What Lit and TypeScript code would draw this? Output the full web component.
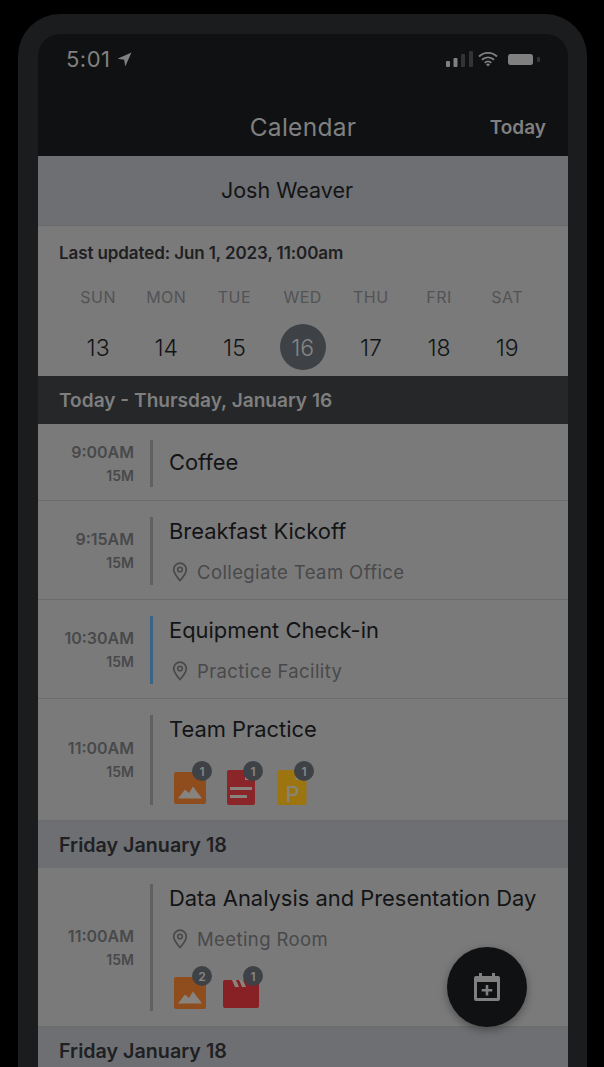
import { LitElement, html, css, svg } from 'lit';
import { customElement } from 'lit/decorators.js';

type Attachment = { kind: 'image' | 'doc' | 'slides' | 'video'; count: number };
type CalEvent = {
  time: string;
  title: string;
  place?: string;
  accent?: boolean;
  files?: Attachment[];
  height: number;
  rule: number;
};

const days = [
  ['SUN', '13'],
  ['MON', '14'],
  ['TUE', '15'],
  ['WED', '16'],
  ['THU', '17'],
  ['FRI', '18'],
  ['SAT', '19'],
];

const today: CalEvent[] = [
  { time: '9:00AM', title: 'Coffee', height: 77, rule: 47 },
  { time: '9:15AM', title: 'Breakfast Kickoff', place: 'Collegiate Team Office', height: 99, rule: 68 },
  { time: '10:30AM', title: 'Equipment Check-in', place: 'Practice Facility', accent: true, height: 99, rule: 68 },
  {
    time: '11:00AM',
    title: 'Team Practice',
    files: [
      { kind: 'image', count: 1 },
      { kind: 'doc', count: 1 },
      { kind: 'slides', count: 1 },
    ],
    height: 122,
    rule: 90,
  },
];

const friday: CalEvent[] = [
  {
    time: '11:00AM',
    title: 'Data Analysis and Presentation Day',
    place: 'Meeting Room',
    files: [
      { kind: 'image', count: 2 },
      { kind: 'video', count: 1 },
    ],
    height: 159,
    rule: 127,
  },
];

const pin = html`<svg class="pin" viewBox="0 0 16 20" width="16" height="20">
  <path d="M8 1.200a6.300 6.300 0 0 0-6.300 6.300c0 4.200 6.300 11 6.300 11s6.300-6.800 6.300-11A6.300 6.300 0 0 0 8 1.200z" fill="none" stroke="#48494b" stroke-width="1.700" />
  <circle cx="8" cy="7.500" r="2.300" fill="none" stroke="#48494b" stroke-width="1.600" />
</svg>`;

// all drawn in a 36 box, the cell pitch is fixed
function fileIcon(kind: Attachment['kind']) {
  if (kind === 'image') {
    return svg`<rect x="2" y="2" width="32" height="32" rx="2" fill="#8f4c1d" />
      <path d="M6 28.500l7-9 4 3.500 4-6.500 9 12z" fill="#878480" />`;
  }
  if (kind === 'doc') {
    return svg`<path d="M6 0h16l10 10v23a2 2 0 0 1-2 2H6a2 2 0 0 1-2-2V2a2 2 0 0 1 2-2z" fill="#8a2529" />
      <path d="M22 0l10 10H22z" fill="#878480" />
      <path d="M7 17h22v3H7zM7 25h17v3H7z" fill="#878480" />`;
  }
  if (kind === 'slides') {
    return svg`<path d="M5.500 0h16l11 10v23a2 2 0 0 1-2 2h-25a2 2 0 0 1-2-2V2a2 2 0 0 1 2-2z" fill="#9c7410" />
      <path d="M21.500 0l11 10h-11z" fill="#878476" />
      <text x="18.500" y="32" text-anchor="middle" font-size="22" font-weight="500" fill="#878476">P</text>`;
  }
  return svg`<path d="M2 5h34v26a2 2 0 0 1-2 2H2a2 2 0 0 1-2-2V7a2 2 0 0 1 2-2z" fill="#872126" />
    <path d="M9 5h4l3 7h-4zM16 5h4l3 7h-4z" fill="#878480" />`;
}

@customElement('app-root')
export class AppRoot extends LitElement {
  static styles = css`
    :host {
      display: block;
      width: 604px;
      height: 1067px;
      background: #000;
      overflow: hidden;
      font-family: Inter, 'Liberation Sans', sans-serif;
      color: #131416;
    }
    .frame {
      box-sizing: border-box;
      margin: 14px 17px 0 18px;
      height: 1053px;
      padding: 20px 19px 0 20px;
      background: #1b1c1e;
      border-radius: 42px 42px 0 0;
    }
    .screen {
      position: relative;
      height: 1033px;
      background: #101113;
      border-radius: 22px 22px 0 0;
      overflow: hidden;
    }
    .top {
      height: 122px;
      color: #808080;
    }
    .content {
      height: 911px;
      background: #7a7a7a;
    }
    .status {
      display: flex;
      align-items: center;
      justify-content: space-between;
      box-sizing: border-box;
      height: 50px;
      padding: 0 27px 0 28px;
    }
    .clock {
      display: flex;
      align-items: center;
      gap: 6px;
      font-size: 22px;
      letter-spacing: 0.5px;
    }
    .signals {
      display: flex;
      align-items: center;
      gap: 5px;
    }
    .battery {
      margin-left: 5px;
    }
    .nav {
      position: relative;
      display: flex;
      justify-content: center;
      padding-top: 27px;
      font-size: 24.500px;
      line-height: 32px;
      letter-spacing: 0.3px;
    }
    .nav b {
      position: absolute;
      right: 22px;
      top: 29px;
      font-size: 19px;
      line-height: 30px;
      font-weight: 600;
      letter-spacing: 0;
    }
    .person {
      box-sizing: border-box;
      height: 70px;
      padding: 0 32px 1px 0;
      display: flex;
      align-items: center;
      justify-content: center;
      background: #6d6f72;
      font-size: 21.500px;
      border-bottom: 1px solid #67696b;
    }
    .updated {
      padding: 15px 0 0 21px;
      font-size: 17px;
      line-height: 24px;
      font-weight: 600;
      color: #1f2022;
      letter-spacing: -0.1px;
    }
    .week {
      display: grid;
      grid-template-columns: repeat(7, 68.200px);
      padding: 20px 0 0 26px;
      justify-items: center;
      text-align: center;
      height: 91px;
    }
    .dow {
      font-size: 16px;
      line-height: 24px;
      color: #525355;
      letter-spacing: 0.5px;
    }
    .num {
      box-sizing: border-box;
      margin-top: 15px;
      padding-top: 2px;
      width: 46px;
      height: 46px;
      display: flex;
      align-items: center;
      justify-content: center;
      font-size: 23px;
      font-weight: 300;
      border-radius: 50%;
    }
    .num.on {
      background: #3e4246;
      color: #858585;
    }
    .head {
      box-sizing: border-box;
      height: 47px;
      padding: 0 21px;
      display: flex;
      align-items: center;
      font-size: 19.700px;
      font-weight: 600;
      background: #6d6f72;
      color: #1f2022;
    }
    .head.dark {
      height: 48px;
      font-size: 19.100px;
      background: #262729;
      color: #7f7f7f;
    }
    .event {
      box-sizing: border-box;
      display: flex;
      padding-top: 16px;
      border-bottom: 1px solid #6c6c6c;
    }
    .when {
      box-sizing: border-box;
      width: 112px;
      padding-right: 16px;
      display: flex;
      flex-direction: column;
      justify-content: center;
      align-items: flex-end;
      color: #48494b;
      font-weight: 600;
      font-size: 16px;
      line-height: 24px;
    }
    .when small {
      font-size: 14px;
      line-height: 24px;
    }
    .rule {
      width: 3px;
      background: #5f6062;
      flex: none;
    }
    .rule.accent {
      background: #3a6484;
    }
    .body {
      margin-top: -1px;
      padding-left: 16px;
      display: flex;
      flex-direction: column;
      min-width: 0;
    }
    .title {
      font-size: 21.900px;
      line-height: 30px;
      color: #131416;
      white-space: nowrap;
    }
    .only {
      margin-top: 8px;
    }
    .place {
      display: flex;
      align-items: center;
      gap: 9px;
      margin: 12px 0 0 3px;
      font-size: 18.500px;
      line-height: 28px;
      color: #48494b;
      letter-spacing: 0.4px;
    }
    .files {
      display: flex;
      gap: 15px;
      margin: 26px 0 0 3px;
    }
    .place + .files {
      margin-top: 22px;
    }
    .file {
      position: relative;
      width: 36px;
      height: 36px;
    }
    .file svg {
      display: block;
      overflow: visible;
    }
    .badge {
      position: absolute;
      right: -4px;
      top: -9px;
      width: 20px;
      height: 20px;
      border-radius: 50%;
      background: #3e4246;
      color: #858585;
      font-size: 12px;
      font-weight: 600;
      display: flex;
      align-items: center;
      justify-content: center;
    }
    .fab {
      position: absolute;
      right: 41px;
      top: 913px;
      width: 80px;
      height: 80px;
      border-radius: 50%;
      background: #101113;
      box-shadow: 0 3px 8px rgba(0, 0, 0, 0.35);
      display: flex;
      align-items: center;
      justify-content: center;
    }
  `;

  renderEvent(e: CalEvent) {
    return html`<div class="event" style="height:${e.height}px">
      <div class="when" style="height:${e.rule}px">${e.time}<small>15M</small></div>
      <div class="rule ${e.accent ? 'accent' : ''}" style="height:${e.rule}px"></div>
      <div class="body">
        <div class="title ${!e.place && !e.files ? 'only' : ''}">${e.title}</div>
        ${e.place ? html`<div class="place">${pin}${e.place}</div>` : ''}
        ${e.files
          ? html`<div class="files">
              ${e.files.map(
                (f) => html`<div class="file">
                  <svg viewBox="0 0 36 36" width="36" height="36">${fileIcon(f.kind)}</svg>
                  <span class="badge">${f.count}</span>
                </div>`
              )}
            </div>`
          : ''}
      </div>
    </div>`;
  }

  render() {
    return html`<div class="frame">
      <div class="screen">
        <div class="top">
          <div class="status">
            <div class="clock">
              5:01
              <svg viewBox="0 0 15 15" width="15" height="15"><path d="M14.500 .5L.5 6.800l6.700 1 1 6.700z" fill="#808080" /></svg>
            </div>
            <div class="signals">
              <svg viewBox="0 0 27 16" width="27" height="16">
                <rect x="0" y="10" width="4" height="6" rx="1" fill="#808080" />
                <rect x="7.500" y="7" width="4" height="9" rx="1" fill="#808080" />
                <rect x="15" y="3" width="4" height="13" rx="1" fill="#343435" />
                <rect x="23" y="0" width="4" height="16" rx="1" fill="#343435" />
              </svg>
              <svg viewBox="0 0 20 16" width="20" height="16">
                <path d="M1 5.500a13 13 0 0 1 18 0M4 8.800a8.600 8.600 0 0 1 12 0M6.800 11.800a4.400 4.400 0 0 1 6.400 0" fill="none" stroke="#808080" stroke-width="1.900" />
                <path d="M10 15.500l-2-2.200a3 3 0 0 1 4 0z" fill="#808080" />
              </svg>
              <svg class="battery" viewBox="0 0 33 11" width="33" height="11">
                <rect x="0" y="0" width="25" height="11" rx="2.500" fill="#808080" />
                <rect x="29" y="3" width="3" height="5" rx="1" fill="#343435" />
              </svg>
            </div>
          </div>
          <div class="nav">Calendar<b>Today</b></div>
        </div>
        <div class="content">
          <div class="person">Josh Weaver</div>
          <div class="updated">Last updated: Jun 1, 2023, 11:00am</div>
          <div class="week">
            ${days.map(
              ([d, n]) => html`<div>
                <div class="dow">${d}</div>
                <div class="num ${n === '16' ? 'on' : ''}">${n}</div>
              </div>`
            )}
          </div>
          <div class="head dark">Today - Thursday, January 16</div>
          ${today.map((e) => this.renderEvent(e))}
          <div class="head">Friday January 18</div>
          ${friday.map((e) => this.renderEvent(e))}
          <div class="head">Friday January 18</div>
        </div>
        <div class="fab">
          <svg viewBox="0 0 28 30" width="28" height="30">
            <path d="M6 1h3v3h10V1h3v3h3a2 2 0 0 1 2 2v21a2 2 0 0 1-2 2H3a2 2 0 0 1-2-2V6a2 2 0 0 1 2-2h3zM4 10v16h20V10z" fill="#808080" />
            <path d="M12.700 13h2.600v4h4v2.600h-4v4h-2.600v-4h-4V17h4z" fill="#808080" />
          </svg>
        </div>
      </div>
    </div>`;
  }
}
